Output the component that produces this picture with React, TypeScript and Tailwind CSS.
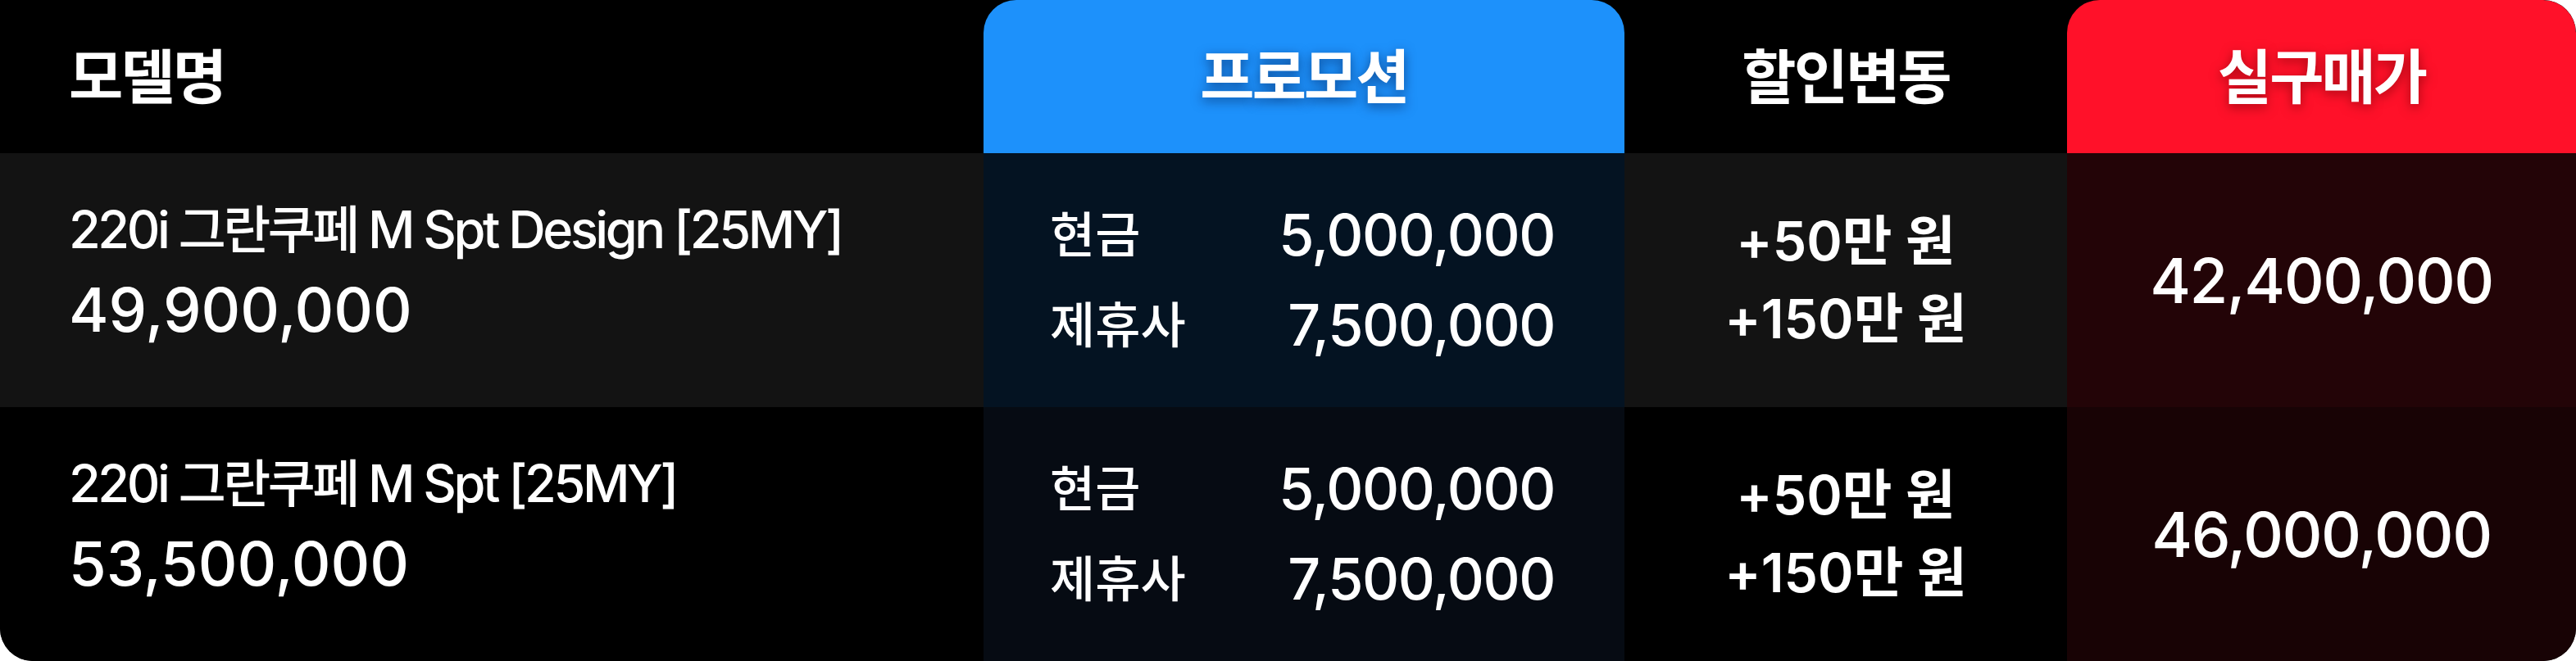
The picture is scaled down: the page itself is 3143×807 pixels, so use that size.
const font = {
  fontFamily: '"Inter", "Noto Sans CJK KR", sans-serif',
};

const rows = [
  {
    name: "220i 그란쿠페 M Spt Design [25MY]",
    price: "49,900,000",
    cash: "5,000,000",
    partner: "7,500,000",
    diff: ["+50만 원", "+150만 원"],
    real: "42,400,000",
    base: "bg-[#131313]",
    promo: "bg-[#041322]",
    red: "bg-[#230407]",
  },
  {
    name: "220i 그란쿠페 M Spt [25MY]",
    price: "53,500,000",
    cash: "5,000,000",
    partner: "7,500,000",
    diff: ["+50만 원", "+150만 원"],
    real: "46,000,000",
    base: "bg-black",
    promo: "bg-[#060b13]",
    red: "bg-[#180305]",
  },
];

export default function App() {
  return (
    <div className="w-[3143px] h-[807px] bg-white" style={font}>
      <div className="grid h-full grid-cols-[1200px_782px_540px_1fr] grid-rows-[187px_310px_310px] overflow-hidden rounded-tr-[40px] rounded-b-[40px] bg-black text-white">
        {/* HEADER */}
        <div className="flex items-center pl-[84px] text-[72px] font-semibold tracking-[-0.04em]">
          모델명
        </div>
        <div className="flex items-center justify-center rounded-t-[40px] bg-[#1d91fb] text-[72px] font-bold tracking-[-0.04em] [text-shadow:0_4px_14px_rgba(0,20,70,0.55)]">
          프로모션
        </div>
        <div className="flex items-center justify-center text-[72px] font-semibold tracking-[-0.04em]">
          할인변동
        </div>
        <div className="flex items-center justify-center rounded-t-[40px] bg-[#ff1129] text-[72px] font-bold tracking-[-0.04em] [text-shadow:0_4px_14px_rgba(90,0,0,0.55)]">
          실구매가
        </div>

        {/* ROWS */}
        {rows.map((r) => (
          <Row key={r.name} r={r} />
        ))}
      </div>
    </div>
  );
}

function Row({ r }: { r: (typeof rows)[number] }) {
  return (
    <>
      <div className={`flex flex-col justify-center pb-[20px] pl-[84px] ${r.base}`}>
        <div className="text-[63px] font-medium leading-[77px] tracking-[-0.055em]">
          {r.name}
        </div>
        <div className="mt-[15px] text-[74px] font-medium leading-[88px]">
          {r.price}
        </div>
      </div>

      <div className={`flex flex-col justify-center pl-[81px] pr-[85px] ${r.promo}`}>
        <div className="flex items-center justify-between leading-[110px]">
          <span className="text-[60px] font-medium">현금</span>
          <span className="text-[70px] font-medium tracking-[-0.02em]">{r.cash}</span>
        </div>
        <div className="flex items-center justify-between leading-[110px]">
          <span className="text-[60px] font-medium">제휴사</span>
          <span className="text-[70px] font-medium tracking-[-0.02em]">{r.partner}</span>
        </div>
      </div>

      <div className={`flex flex-col items-center justify-center text-[66px] font-semibold leading-[95px] ${r.base}`}>
        <div>{r.diff[0]}</div>
        <div>{r.diff[1]}</div>
      </div>

      <div className={`flex items-center justify-center text-[76px] font-medium tracking-[-0.02em] ${r.red}`}>
        {r.real}
      </div>
    </>
  );
}
